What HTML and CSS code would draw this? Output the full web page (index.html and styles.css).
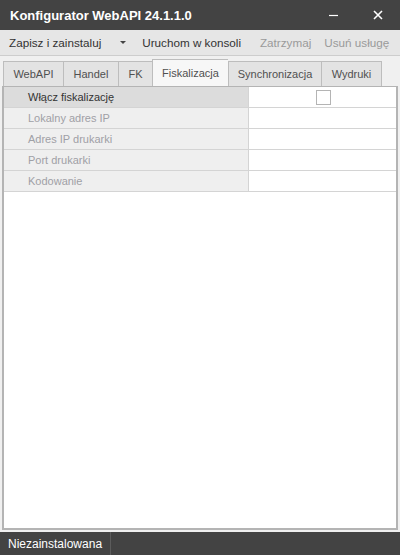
FILE: index.html
```html
<!DOCTYPE html>
<html lang="pl">
<head>
    <meta charset="UTF-8">
    <title>Konfigurator WebAPI 24.1.1.0</title>
    <link rel="stylesheet" href="styles.css">
</head>
<body>
    <div class="window">
        <div class="titlebar">
            <span class="title">Konfigurator WebAPI 24.1.1.0</span>
            <span class="win-btn">
                <svg width="10" height="10" viewBox="0 0 10 10"><path d="M0 5.5h9" stroke="#fff" stroke-width="1.2"/></svg>
            </span>
            <span class="win-btn">
                <svg width="10" height="10" viewBox="0 0 10 10"><path d="M1 1l8 8M9 1l-8 8" stroke="#fff" stroke-width="1.6"/></svg>
            </span>
        </div>

        <div class="menubar">
            <span class="menu-item">Zapisz i zainstaluj</span>
            <span class="menu-arrow">
                <svg width="6" height="4" viewBox="0 0 6 4"><path d="M0 0h6L3 3z" fill="#444"/></svg>
            </span>
            <span class="menu-item">Uruchom w konsoli</span>
            <span class="menu-item disabled stop">Zatrzymaj</span>
            <span class="menu-item disabled">Usuń usługę</span>
        </div>

        <div class="tabs">
            <span class="tab w-webapi">WebAPI</span>
            <span class="tab w-handel">Handel</span>
            <span class="tab w-fk">FK</span>
            <span class="tab w-fisk active">Fiskalizacja</span>
            <span class="tab w-sync">Synchronizacja</span>
            <span class="tab w-wydruki">Wydruki</span>
        </div>

        <div class="panel">
            <div class="grid">
                <div class="row selected">
                    <div class="label">Włącz fiskalizację</div>
                    <div class="value"><span class="checkbox"></span></div>
                </div>
                <div class="row">
                    <div class="label">Lokalny adres IP</div>
                    <div class="value"></div>
                </div>
                <div class="row">
                    <div class="label">Adres IP drukarki</div>
                    <div class="value"></div>
                </div>
                <div class="row">
                    <div class="label">Port drukarki</div>
                    <div class="value"></div>
                </div>
                <div class="row">
                    <div class="label">Kodowanie</div>
                    <div class="value"></div>
                </div>
            </div>
        </div>

        <div class="statusbar">
            <span class="status">Niezainstalowana</span>
        </div>
    </div>
</body>
</html>
```

FILE: styles.css
```css
body {
    margin: 0;
    padding: 0;
    font-family: 'Liberation Sans', Arial, sans-serif;
    font-size: 11px;
    background-color: #f0f0f0;
}
.window {
    width: 400px;
    height: 555px;
    display: flex;
    flex-direction: column;
    background-color: #f0f0f0;
}
.titlebar {
    height: 30px;
    background-color: #434343;
    color: #fff;
    display: flex;
    align-items: center;
}
.title {
    flex: 1;
    padding-left: 10px;
    font-weight: bold;
    font-size: 13px;
}
.win-btn {
    width: 44px;
    height: 30px;
    display: flex;
    align-items: center;
    justify-content: center;
}
.menubar {
    height: 25px;
    background-color: #e6e6e6;
    border-bottom: 1px solid #cdcdcd;
    display: flex;
    align-items: center;
    padding-left: 9px;
    color: #333;
    font-size: 11.7px;
    white-space: nowrap;
}
.menu-arrow {
    display: flex;
    margin: 0 16px 0 19px;
}
.menu-item.stop {
    margin: 0 13px 0 19px;
}
.menu-item.disabled {
    color: #9a9a9a;
}
.tabs {
    display: flex;
    align-items: flex-end;
    padding-left: 3px;
    height: 30px;
    color: #505050;
    white-space: nowrap;
}
.tab {
    height: 25px;
    box-sizing: border-box;
    border: 1px solid #bdbdbd;
    border-bottom: none;
    border-right: none;
    background-color: #e3e3e3;
    display: flex;
    align-items: center;
    justify-content: center;
}
.tab.active {
    height: 27px;
    background-color: #f7f7f7;
}
.w-webapi { width: 60px; }
.w-handel { width: 55px; }
.w-fk { width: 34px; }
.w-fisk { width: 76px; }
.w-sync { width: 93px; }
.w-wydruki { width: 61px; border-right: 1px solid #bdbdbd; }
.panel {
    flex: 1;
    margin: 0 2px 2px 2px;
    border: 2px solid #b4b4b4;
    border-top: 1px solid #b4b4b4;
    background-color: #fff;
}
.row {
    display: flex;
    height: 20px;
    border-bottom: 1px solid #d4d4d4;
}
.label {
    width: 245px;
    border-right: 1px solid #d4d4d4;
    background-color: #efefef;
    color: #9fa0a6;
    padding-left: 24px;
    box-sizing: border-box;
    display: flex;
    align-items: center;
}
.row.selected .label {
    background-color: #dcdcdc;
    color: #333;
}
.value {
    flex: 1;
    display: flex;
    align-items: center;
    padding-left: 67px;
}
.checkbox {
    width: 13px;
    height: 13px;
    border: 1px solid #b4b4b4;
    background-color: #fff;
}
.statusbar {
    height: 23px;
    background-color: #434343;
    color: #fff;
    display: flex;
}
.status {
    display: flex;
    align-items: center;
    padding: 0 8px;
    border-right: 1px solid #5c5c5c;
    font-size: 12px;
}
```
